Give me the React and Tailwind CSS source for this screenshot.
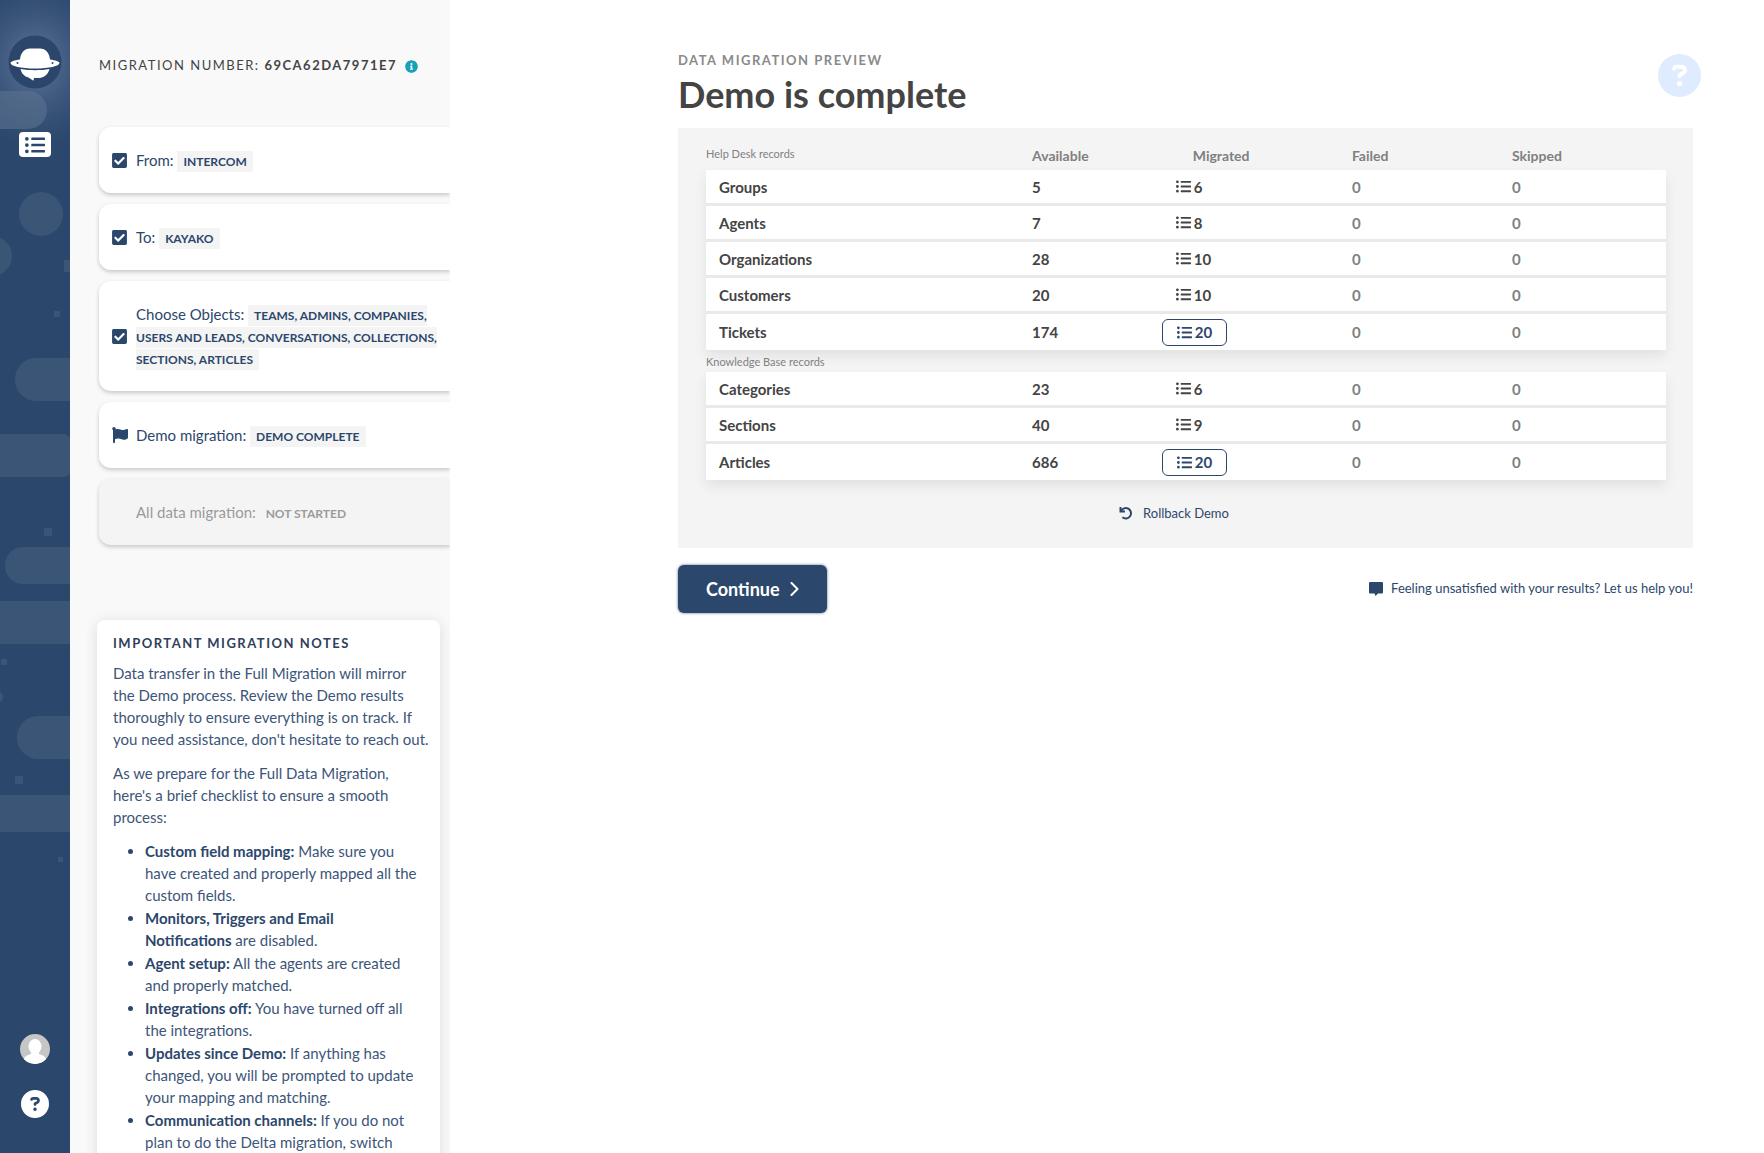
import { FaCheckSquare, FaFlag, FaInfoCircle, FaListUl } from "react-icons/fa";
import { FaCircleQuestion } from "react-icons/fa6";

const steps = [
  { label: "From:", value: "Intercom", icon: "check" },
  { label: "To:", value: "Kayako", icon: "check" },
  {
    label: "Choose Objects:",
    value: "Teams, Admins, Companies, Users and leads, Conversations, Collections, Sections, Articles",
    icon: "check",
  },
  { label: "Demo migration:", value: "Demo complete", icon: "flag" },
  { label: "All data migration:", value: "Not started", disabled: true },
];

const notes = [
  { title: "Custom field mapping:", text: "Make sure you have created and properly mapped all the custom fields." },
  { title: "Monitors, Triggers and Email Notifications", text: "are disabled." },
  { title: "Agent setup:", text: "All the agents are created and properly matched." },
  { title: "Integrations off:", text: "You have turned off all the integrations." },
  {
    title: "Updates since Demo:",
    text: "If anything has changed, you will be prompted to update your mapping and matching.",
  },
  { title: "Communication channels:", text: "If you do not plan to do the Delta migration, switch" },
];

const helpDesk = [
  { name: "Groups", available: 5, migrated: 6 },
  { name: "Agents", available: 7, migrated: 8 },
  { name: "Organizations", available: 28, migrated: 10 },
  { name: "Customers", available: 20, migrated: 10 },
  { name: "Tickets", available: 174, migrated: 20, open: true },
];

const knowledgeBase = [
  { name: "Categories", available: 23, migrated: 6 },
  { name: "Sections", available: 40, migrated: 9 },
  { name: "Articles", available: 686, migrated: 20, open: true },
];

function Logo() {
  return (
    <svg viewBox="0 0 54 54" className="h-[54px] w-[54px]" aria-hidden="true">
      <circle cx="27" cy="27" r="26.500" fill="#2c466b" />
      <path
        d="M12 24.500C12.500 18 16.500 13.500 22 13.500h10c5.500 0 9.500 4.500 10 11 5.500.8 9.500 2 9.500 3.500 0 3-10.500 5.500-24.500 5.500S2.500 31 2.500 28c0-1.500 4-2.700 9.500-3.500z"
        fill="#fff"
      />
      <path
        d="M12.500 34c4.500.8 9.500 1.200 14.500 1.200s10-.4 14.500-1.200C40 39.500 36 43 31 43h-5l-.6 2.800L20.500 42.500C16.500 41.500 13.500 38.500 12.500 34z"
        fill="#fff"
      />
      <circle cx="9.500" cy="28" r="1" fill="#2c466b" />
      <circle cx="44.500" cy="28" r="1" fill="#2c466b" />
    </svg>
  );
}

function RailBackdrop() {
  return (
    <svg className="absolute inset-0 h-full w-full" fill="#3a5576" aria-hidden="true">
      <defs>
        <radialGradient id="glow">
          <stop offset="0" stopColor="#6d84a6" stopOpacity="0.8" />
          <stop offset="1" stopColor="#48628a" stopOpacity="0" />
        </radialGradient>
      </defs>
      <ellipse cx="35" cy="62" rx="75" ry="85" fill="url(#glow)" />
      <rect x="-30" y="91" width="77" height="38" rx="19" fill="#5b728f" fillOpacity="0.6" />
      <circle cx="41" cy="214" r="22" />
      <circle cx="-8" cy="256" r="20" />
      <rect x="64" y="260" width="8" height="12" />
      <rect x="54" y="311" width="6" height="6" />
      <rect x="15" y="358" width="90" height="43" rx="21" />
      <rect x="-30" y="434" width="101" height="43" rx="8" />
      <rect x="44" y="528" width="8" height="8" />
      <rect x="5" y="547" width="100" height="37" rx="18" />
      <rect x="-5" y="601" width="90" height="43" />
      <rect x="1" y="659" width="6" height="6" />
      <circle cx="-3" cy="697" r="6" />
      <rect x="17" y="716" width="90" height="43" rx="21" />
      <rect x="15" y="776" width="8" height="8" />
      <rect x="-5" y="795" width="90" height="37" />
      <rect x="58" y="857" width="5" height="5" />
    </svg>
  );
}

function Rail() {
  return (
    <nav className="relative flex w-[70px] shrink-0 flex-col items-center overflow-hidden bg-[#2c476c] pt-[35px] pb-[35px]">
      <RailBackdrop />
      <a href="#home" aria-label="Home" className="relative">
        <Logo />
      </a>
      <a
        href="#migrations"
        aria-label="Migrations"
        className="relative mt-[43px] flex h-[25px] w-8 items-center justify-center rounded bg-white text-[#2c476c]"
      >
        <FaListUl size={20} />
      </a>
      <a href="#profile" aria-label="Profile" className="relative mt-auto">
        <svg viewBox="0 0 30 30" className="h-[30px] w-[30px]" aria-hidden="true">
          <clipPath id="avatar">
            <circle cx="15" cy="15" r="15" />
          </clipPath>
          <g clipPath="url(#avatar)">
            <rect width="30" height="30" fill="#c6c6c6" />
            <ellipse cx="15" cy="12.500" rx="6.500" ry="7.500" fill="#fff" />
            <path d="M11 17h8v3c4 1 7 3 7.500 6v4h-23v-4c.5-3 3.500-5 7.500-6z" fill="#fff" />
          </g>
        </svg>
      </a>
      <a href="#help" aria-label="Help" className="relative mt-[26px] text-white">
        <FaCircleQuestion size={28} />
      </a>
    </nav>
  );
}

function Step({ label, value, icon, disabled }) {
  return (
    <li
      className={
        disabled
          ? "flex items-center rounded-l-xl bg-[#f4f4f4] py-[22px] pr-3 pl-[13px] text-[#9b9b9b] shadow-[0_2px_4px_rgba(0,0,0,0.2)]"
          : "flex items-center rounded-l-xl bg-white py-[22px] pr-3 pl-[13px] text-[#2c476c] shadow-[0_2px_4px_rgba(0,0,0,0.2)]"
      }
    >
      <span className="w-6 shrink-0">
        {icon === "check" && <FaCheckSquare size={17} className="-ml-px" />}
        {icon === "flag" && <FaFlag size={16} />}
      </span>
      <span className="text-[15px] leading-[22px]">
        {label}{" "}
        <span className="bg-[#f4f4f4] px-1.5 py-[3px] text-xs leading-none font-bold uppercase">{value}</span>
      </span>
    </li>
  );
}

function Sidebar() {
  return (
    <aside className="w-[380px] shrink-0 overflow-hidden bg-[#f9f9f9] pt-[55px] pl-[29px]">
      <div className="flex h-[22px] items-center text-[13px] tracking-[1.5px] text-[#444] uppercase">
        <span>
          Migration number: <strong>69ca62da7971e7</strong>
        </span>
        <FaInfoCircle size={13} className="ml-2 text-[#17a2b8]" />
      </div>
      <ul className="mt-[50px] flex flex-col gap-[11px]">
        {steps.map((step) => (
          <Step key={step.label} {...step} />
        ))}
      </ul>
      <section className="mt-[75px] mr-2.5 -ml-0.5 rounded-lg bg-white pt-3 pr-2.5 pb-10 pl-4 text-[15px] leading-[22px] text-[#3d5579] shadow-[0_2px_14px_rgba(0,0,0,0.12)]">
        <h2 className="text-[13px] font-bold tracking-[1.5px] text-[#2f3f5c] uppercase">Important migration notes</h2>
        <p className="mt-2">
          Data transfer in the Full Migration will mirror the Demo process. Review the Demo results thoroughly to
          ensure everything is on track. If you need assistance, don't hesitate to reach out.
        </p>
        <p className="mt-3">
          As we prepare for the Full Data Migration, here's a brief checklist to ensure a smooth process:
        </p>
        <ul className="mt-3 list-disc space-y-px pr-2.5 pl-8 marker:text-[#2c476c]">
          {notes.map((note) => (
            <li key={note.title}>
              <strong className="text-[#2c476c]">{note.title}</strong> {note.text}
            </li>
          ))}
        </ul>
      </section>
    </aside>
  );
}

function RecordRows({ rows }) {
  return (
    <tbody className="bg-white shadow-[0_6px_12px_rgba(0,0,0,0.08)]">
      {rows.map((row) => (
        <tr key={row.name} className="group font-bold text-[#444]">
          <th scope="row" className="h-9 border-b-[3px] border-[#e9e9e9] pl-[13px] text-left group-last:border-b-0">
            {row.name}
          </th>
          <td className="border-b-[3px] border-[#e9e9e9] pl-1.5 group-last:border-b-0">{row.available}</td>
          <td className="border-b-[3px] border-[#e9e9e9] pl-1.5 group-last:border-b-0">
            {row.open ? (
              <button
                type="button"
                className="my-1 flex h-[27px] items-center gap-[3px] rounded-md border border-[#2c476c] px-3.5 text-[#2c476c]"
              >
                <FaListUl size={15} />
                {row.migrated}
              </button>
            ) : (
              <span className="flex items-center gap-[3px] px-3.5">
                <FaListUl size={15} />
                {row.migrated}
              </span>
            )}
          </td>
          <td className="border-b-[3px] border-[#e9e9e9] pl-1.5 text-[#808080] group-last:border-b-0">0</td>
          <td className="border-b-[3px] border-[#e9e9e9] pl-1.5 text-[#808080] group-last:border-b-0">0</td>
        </tr>
      ))}
    </tbody>
  );
}

function Results() {
  return (
    <div className="bg-[#f4f4f4] pt-4 pr-[27px] pb-6 pl-7">
      <table className="w-full table-fixed border-separate border-spacing-0 text-[15px] leading-[22px]">
        <thead>
          <tr className="text-left text-sm text-[#808080]">
            <th scope="col" className="h-[26px] w-1/3 pb-1.5 text-[11px] leading-5 font-normal">
              Help Desk records
            </th>
            <th scope="col" className="w-[13.5%] pb-0.5 pl-1.5">Available</th>
            <th scope="col" className="w-[19.8%] pb-0.5 pl-[37px]">Migrated</th>
            <th scope="col" className="w-1/6 pb-0.5 pl-1.5">Failed</th>
            <th scope="col" className="w-1/6 pb-0.5 pl-1.5">Skipped</th>
          </tr>
        </thead>
        <RecordRows rows={helpDesk} />
        <tbody>
          <tr>
            <th colSpan={5} scope="rowgroup" className="h-[22px] pt-0.5 text-left text-[11px] leading-5 font-normal text-[#808080]">
              Knowledge Base records
            </th>
          </tr>
        </tbody>
        <RecordRows rows={knowledgeBase} />
      </table>
      <div className="mt-[22px] flex justify-center pr-6">
        <button type="button" className="flex items-center gap-2.5 text-[13px] leading-[22px] text-[#2c476c]">
          <svg viewBox="0 0 14 14" className="h-3.5 w-3.5" fill="none" stroke="currentColor" strokeWidth="2" aria-hidden="true">
            <path d="M1.500 1v4.500H6" />
            <path d="M2 5.200A5.200 5.200 0 1 1 3.400 11.200" />
          </svg>
          Rollback Demo
        </button>
      </div>
    </div>
  );
}

export default function App() {
  return (
    <div className="flex h-screen overflow-hidden bg-white font-['Lato',sans-serif]">
      <Rail />
      <Sidebar />
      <main className="min-w-0 flex-1 pt-[50px] pr-[71px] pl-[228px]">
        <header className="flex items-start justify-between pb-2.5">
          <div>
            <p className="text-[13px] leading-5 font-bold tracking-[1.5px] text-[#8a8a8a] uppercase">
              Data migration preview
            </p>
            <h1 className="text-4xl leading-[48px] font-bold text-[#444]">Demo is complete</h1>
          </div>
          <button type="button" aria-label="Help" className="-mr-2 pt-1 text-[#dfebff]">
            <FaCircleQuestion size={43} />
          </button>
        </header>
        <Results />
        <div className="mt-[17px] flex items-center justify-between">
          <button
            type="button"
            className="flex h-12 items-center gap-2.5 rounded-md bg-[#2c476c] px-7 text-lg font-bold text-white shadow-[0_0_3px_rgba(44,71,108,0.8)]"
          >
            Continue
            <svg viewBox="0 0 9 14" className="h-3.5 w-[9px]" fill="none" stroke="currentColor" strokeWidth="2" aria-hidden="true">
              <path d="M1.500 1L7.500 7L1.500 13" strokeLinecap="round" strokeLinejoin="round" />
            </svg>
          </button>
          <a href="#support" className="flex items-center gap-2 text-[13px] text-[#2c476c]">
            <svg viewBox="0 0 14 14" className="h-3.5 w-3.5" fill="currentColor" aria-hidden="true">
              <path d="M1 0h12a1 1 0 0 1 1 1v9.500a1 1 0 0 1-1 1H9L6.500 14 5.500 11.500H1a1 1 0 0 1-1-1V1a1 1 0 0 1 1-1z" />
            </svg>
            Feeling unsatisfied with your results? Let us help you!
          </a>
        </div>
      </main>
    </div>
  );
}
